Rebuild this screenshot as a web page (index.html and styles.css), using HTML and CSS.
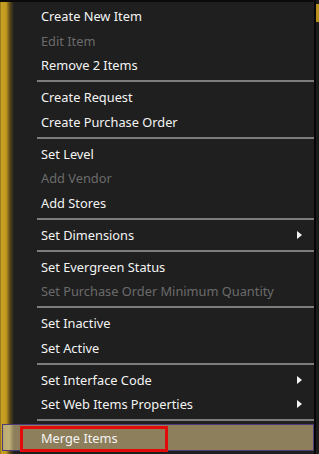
FILE: index.html
```html
<!DOCTYPE html>
<html lang="en">
  <head>
    <meta charset="UTF-8" />
    <meta name="viewport" content="width=device-width, initial-scale=1.0" />
    <title>Item Menu</title>
    <link rel="stylesheet" href="styles.css">
  </head>
  <body>
    <div class="screen">
      <div class="menu">
        <div class="item">Create New Item</div>
        <div class="item disabled">Edit Item</div>
        <div class="item">Remove 2 Items</div>
        <div class="sep"></div>
        <div class="item">Create Request</div>
        <div class="item">Create Purchase Order</div>
        <div class="sep"></div>
        <div class="item">Set Level</div>
        <div class="item disabled">Add Vendor</div>
        <div class="item">Add Stores</div>
        <div class="sep"></div>
        <div class="item sub">Set Dimensions</div>
        <div class="sep"></div>
        <div class="item">Set Evergreen Status</div>
        <div class="item disabled">Set Purchase Order Minimum Quantity</div>
        <div class="sep"></div>
        <div class="item">Set Inactive</div>
        <div class="item">Set Active</div>
        <div class="sep"></div>
        <div class="item sub">Set Interface Code</div>
        <div class="item sub">Set Web Items Properties</div>
        <div class="sep"></div>
        <div class="item hover">Merge Items</div>
      </div>
      <div class="behind">
        <span class="tag"></span>
      </div>
      <div class="callout"></div>
    </div>
  </body>
</html>
```

FILE: styles.css
```css
/* General styles */
body {
  margin: 0;
  background-color: #1a1a1a;
  font-family: "Noto Sans", "Open Sans", sans-serif;
  overflow: hidden;
}

.screen {
  position: relative;
  display: flex;
  width: 319px;
  height: 454px;
  overflow: hidden;
}

/* Menu */
.menu {
  display: flex;
  flex-direction: column;
  width: 314px;
  padding-top: 2px;
  border-top: 2px solid #0a0a0a;
  border-right: 2px solid #060606;
  background-color: #1f1f1f;
  background-image: linear-gradient(
    to right,
    #6e5514 0,
    #c9a123 1px,
    #c29a22 6px,
    #5a4818 10px,
    #1f1f1f 14px
  );
}

.item {
  display: flex;
  align-items: center;
  justify-content: space-between;
  height: 24.5px;
  padding: 0 12px 0 41px;
  color: #f4f4f4;
  font-size: 12.8px;
  white-space: nowrap;
}

.item.disabled {
  color: #6b6b6b;
}

.item.sub::after {
  content: "";
  border-left: 5px solid #f4f4f4;
  border-top: 4px solid transparent;
  border-bottom: 4px solid transparent;
}

.item.hover {
  height: 25px;
  margin: 0 0 0 2px;
  padding-left: 38px;
  border: 1px solid #4c3b78;
  background-color: #8e7f5c;
  background-image: linear-gradient(
    to right,
    #b8a86f 0,
    #c4b47a 6px,
    #8e7f5c 11px
  );
}

.sep {
  height: 2px;
  margin: 2.5px 0 3px 37px;
  background-color: #7c7c7c;
}

/* Window behind the menu */
.behind {
  flex: 1;
  background-color: #1c1c1c;
}

.tag {
  display: block;
  height: 18px;
  margin-top: 4px;
  background-color: #b8901c;
}

/* Red annotation box */
.callout {
  position: absolute;
  left: 20px;
  top: 426px;
  width: 142px;
  height: 20px;
  border: 3px solid #e30a0a;
}
```
